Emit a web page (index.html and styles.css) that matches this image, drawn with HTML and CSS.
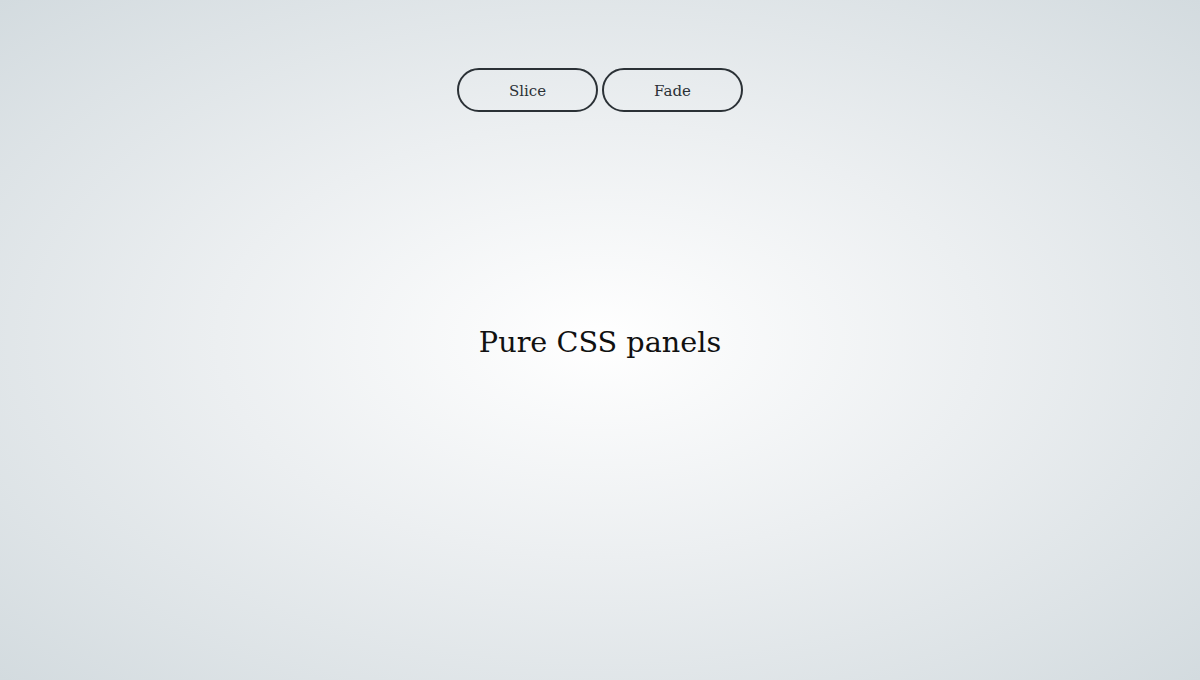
FILE: index.html
```html
<!DOCTYPE html>
<html>
<head>
<meta charset="utf-8">
<link rel="stylesheet" href="styles.css">
</head>
<body>
<div class="page">
  <nav class="nav">
    <button class="btn">Slice</button>
    <button class="btn">Fade</button>
  </nav>
  <h1 class="title">Pure CSS panels</h1>
</div>
</body>
</html>
```
FILE: styles.css
```css
html, body {
  margin: 0;
  height: 100%;
}
body {
  background: radial-gradient(ellipse farthest-corner at 50% 50%, #ffffff 0%, #eceff1 45%, #d3dbdf 100%);
  font-family: "DejaVu Serif", "Liberation Serif", serif;
  color: #111;
}
.page {
  height: 680px;
  display: flex;
  flex-direction: column;
  align-items: center;
}
.nav {
  display: flex;
  gap: 4px;
  margin-top: 68px;
}
.btn {
  width: 141px;
  height: 44px;
  box-sizing: border-box;
  border: 2px solid #2b3136;
  border-radius: 22px;
  background: transparent;
  font-family: "DejaVu Serif", "Liberation Serif", serif;
  font-size: 15px;
  color: #2b3136;
  padding: 0;
  padding-top: 2px;
}
.title {
  margin: 0;
  margin-top: 212px;
  font-weight: 300;
  font-size: 28.7px;
  line-height: 36px;
  color: #111;
}
```
